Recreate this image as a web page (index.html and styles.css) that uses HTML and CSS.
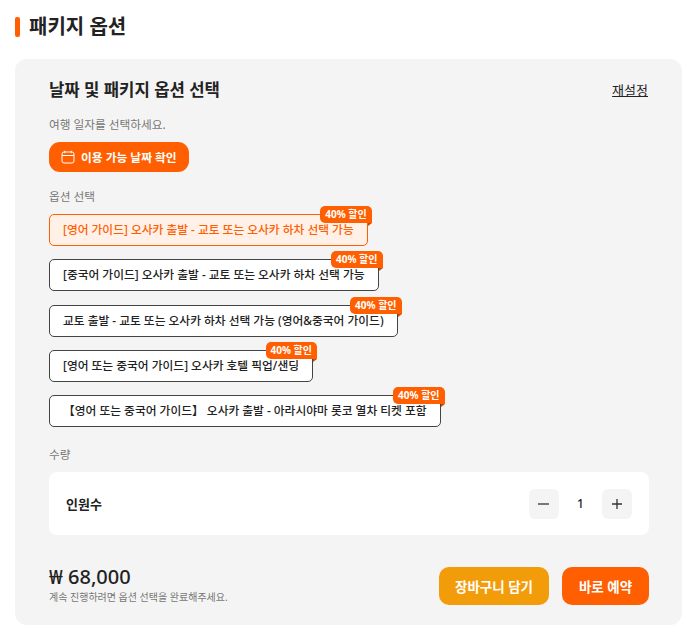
FILE: index.html
```html
<!DOCTYPE html>
<html lang="ko">
<head>
  <meta charset="UTF-8"/>
  <meta name="viewport" content="width=device-width, initial-scale=1.0"/>
  <title>패키지 옵션</title>
  <link rel="stylesheet" href="styles.css">
</head>
<body>
  <h2 class="section-title">패키지 옵션</h2>
  <div class="card">
    <div class="card-head">
      <h3>날짜 및 패키지 옵션 선택</h3>
      <a class="reset" href="#">재설정</a>
    </div>
    <p class="label date-label">여행 일자를 선택하세요.</p>
    <button class="date-btn" type="button">
      <svg width="14" height="14" viewBox="0 0 14 14" fill="none" stroke="#fff" stroke-width="1">
        <rect x="1" y="2" width="12" height="11" rx="2"/>
        <path d="M1 5.5h12M3.8 .8v2.4M10.2 .8v2.4"/>
      </svg>
      이용 가능 날짜 확인
    </button>
    <p class="label option-label">옵션 선택</p>
    <div class="options">
      <div class="option selected">[영어 가이드] 오사카 출발 - 교토 또는 오사카 하차 선택 가능<span class="badge">40% 할인</span></div>
      <div class="option">[중국어 가이드] 오사카 출발 - 교토 또는 오사카 하차 선택 가능<span class="badge">40% 할인</span></div>
      <div class="option">교토 출발 - 교토 또는 오사카 하차 선택 가능 (영어&amp;중국어 가이드)<span class="badge">40% 할인</span></div>
      <div class="option">[영어 또는 중국어 가이드] 오사카 호텔 픽업/샌딩<span class="badge">40% 할인</span></div>
      <div class="option">【영어 또는 중국어 가이드】 오사카 출발 - 아라시야마 롯코 열차 티켓 포함<span class="badge">40% 할인</span></div>
    </div>
    <p class="label qty-label">수량</p>
    <div class="qty-box">
      <span class="qty-name">인원수</span>
      <div class="stepper">
        <button class="step" type="button">
          <svg width="12" height="12" viewBox="0 0 12 12" stroke="#333" stroke-width="1.3"><path d="M0 6h11"/></svg>
        </button>
        <span class="count">1</span>
        <button class="step" type="button">
          <svg width="12" height="12" viewBox="0 0 12 12" stroke="#333" stroke-width="1.3"><path d="M1 6h10M6 1v10"/></svg>
        </button>
      </div>
    </div>
    <div class="footer">
      <div class="total">
        <div class="price">₩ 68,000</div>
        <div class="hint">계속 진행하려면 옵션 선택을 완료해주세요.</div>
      </div>
      <div class="actions">
        <button class="btn cart" type="button">장바구니 담기</button>
        <button class="btn book" type="button">바로 예약</button>
      </div>
    </div>
  </div>
</body>
</html>
```

FILE: styles.css
```css
* { box-sizing: border-box; }
body { margin: 0; padding: 15px 11px 12px 15px; background: #fff; color: #222; font-family: "Noto Sans", "Noto Sans CJK KR", sans-serif; }
p, h2, h3 { margin: 0; }
button { font-family: inherit; border: none; cursor: pointer; }

.section-title { display: flex; align-items: center; gap: 9px; height: 24px; font-size: 20px; font-weight: 700; line-height: 24px; }
.section-title::before { content: ""; width: 5px; height: 20px; border-radius: 2px; background: #ff5f00; }

.card { margin-top: 20px; padding: 18px 33px 20px 34px; background: #f4f4f4; border-radius: 12px; }
.card-head { display: flex; justify-content: space-between; align-items: center; height: 24px; }
.card-head h3 { font-size: 16.7px; font-weight: 700; }
.reset { font-size: 13px; color: #222; margin-right: 1px; }

.label { font-size: 11.7px; line-height: 16px; color: #777; }
.date-label { margin-top: 15px; }
.date-btn { display: flex; align-items: center; gap: 6px; margin-top: 10px; height: 30px; padding: 0 12px 1px; border-radius: 11px; background: #ff5f00; color: #fff; font-size: 11.76px; font-weight: 700; }
.option-label { margin-top: 16px; }

.options { display: flex; flex-direction: column; align-items: flex-start; gap: 13.25px; margin-top: 10px; }
.option { position: relative; height: 32px; padding: 0 13px; border: 1px solid #444; border-radius: 5px; background: #fff; font-size: 11.76px; font-weight: 500; line-height: 29px; white-space: nowrap; }
.option.selected { border-color: #ff5f00; background: #fff0e8; color: #ff5f00; }
.badge { position: absolute; top: -9px; right: -5px; height: 17px; padding: 0 5px; border-radius: 5px 5px 0 5px; background: #ff5f00; color: #fff; font-size: 10px; font-weight: 700; line-height: 17px; }
.badge::after { content: ""; position: absolute; right: 0; bottom: -3px; border-top: 3px solid #c94b00; border-right: 4px solid transparent; }

.qty-label { margin-top: 19px; }
.qty-box { display: flex; justify-content: space-between; align-items: center; height: 63px; margin-top: 10px; padding: 0 17px; background: #fff; border-radius: 8px; }
.qty-name { font-size: 13px; font-weight: 700; }
.stepper { display: flex; align-items: center; }
.step { display: flex; align-items: center; justify-content: center; width: 30px; height: 30px; padding: 0; border-radius: 6px; background: #f4f4f4; }
.count { width: 43px; text-align: center; font-size: 12px; font-weight: 500; }

.footer { display: flex; justify-content: space-between; align-items: flex-start; margin-top: 32px; }
.total { margin-top: -2px; }
.price { font-size: 20px; font-weight: 500; line-height: 24px; }
.hint { margin-top: 1px; font-size: 10px; line-height: 14px; color: #777; }
.actions { display: flex; gap: 13px; }
.btn { height: 38px; border-radius: 10px; color: #fff; font-size: 13.5px; font-weight: 700; }
.cart { width: 110px; background: #f39c0a; }
.book { width: 87px; background: #ff5f00; }
```
